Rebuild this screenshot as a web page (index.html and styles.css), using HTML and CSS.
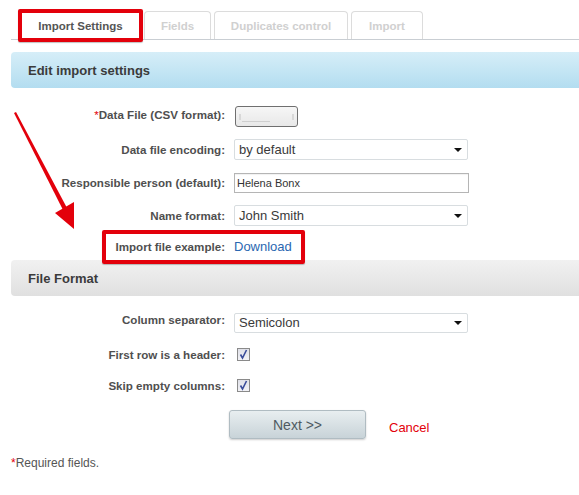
FILE: index.html
```html
<!DOCTYPE html>
<html>
<head>
<meta charset="utf-8">
<link rel="stylesheet" href="styles.css">
</head>
<body>
<div class="page">
  <div class="tabs">
    <div class="tab tab-active">Import Settings</div>
    <div class="tab tab-fields">Fields</div>
    <div class="tab tab-dup">Duplicates control</div>
    <div class="tab tab-import">Import</div>
  </div>

  <div class="section-head blue">Edit import settings</div>

  <div class="form form-main">
    <div class="row r1">
      <div class="label"><span class="req">*</span>Data File (CSV format):</div>
      <div class="control"><div class="filebtn"><span class="fb-l"></span><span class="fb-line"></span><span class="fb-r"></span></div></div>
    </div>
    <div class="row r2">
      <div class="label">Data file encoding:</div>
      <div class="control"><div class="select">by default<span class="caret"></span></div></div>
    </div>
    <div class="row r3">
      <div class="label">Responsible person (default):</div>
      <div class="control"><div class="textinput">Helena Bonx</div></div>
    </div>
    <div class="row r4">
      <div class="label">Name format:</div>
      <div class="control"><div class="select">John Smith<span class="caret"></span></div></div>
    </div>
    <div class="row r5">
      <div class="label">Import file example:</div>
      <div class="control"><span class="link">Download</span></div>
    </div>
    <div class="annot-box"></div>
    <svg class="arrow" width="90" height="130" viewBox="0 0 90 130">
      <polygon points="14,13 16,12 67,108 63,110" fill="#e3000b"/>
      <polygon points="55,113 74,102 74,129" fill="#e3000b"/>
    </svg>
  </div>

  <div class="section-head gray">File Format</div>

  <div class="form form-second">
    <div class="row s1">
      <div class="label">Column separator:</div>
      <div class="control"><div class="select sel-small">Semicolon<span class="caret"></span></div></div>
    </div>
    <div class="row s2">
      <div class="label">First row is a header:</div>
      <div class="control"><span class="checkbox"><svg width="11" height="11" viewBox="0 0 11 11"><path d="M2.5 5.5 L4.5 9 L8.5 1" fill="none" stroke="#3a4c9a" stroke-width="1.6"/></svg></span></div>
    </div>
    <div class="row s3">
      <div class="label">Skip empty columns:</div>
      <div class="control"><span class="checkbox"><svg width="11" height="11" viewBox="0 0 11 11"><path d="M2.5 5.5 L4.5 9 L8.5 1" fill="none" stroke="#3a4c9a" stroke-width="1.6"/></svg></span></div>
    </div>
  </div>

  <div class="buttons">
    <div class="btn-next">Next &gt;&gt;</div>
    <span class="cancel">Cancel</span>
  </div>

  <div class="required"><span class="req">*</span>Required fields.</div>
</div>
</body>
</html>
```

FILE: styles.css
```css
html, body {
  margin: 0;
  padding: 0;
  background: #fff;
}
body {
  font-family: "Liberation Sans", Arial, sans-serif;
  color: #555;
  width: 579px;
  height: 495px;
  overflow: hidden;
}
.page {
  position: relative;
}
.tabs {
  display: flex;
  align-items: flex-start;
  margin-left: 11px;
  padding: 9px 0 0 7px;
  height: 30px;
  border-bottom: 1px solid #c9ced3;
}
.tab {
  box-sizing: border-box;
  height: 28px;
  margin-top: 2px;
  border: 1px solid #dcdcdc;
  border-bottom: none;
  border-radius: 4px 4px 0 0;
  background: #fff;
  color: #d0d0d0;
  font-weight: bold;
  font-size: 11.5px;
  display: flex;
  align-items: center;
  justify-content: center;
  margin-left: 3px;
}
.tab-active {
  position: relative;
  z-index: 2;
  width: 125px;
  height: 33px;
  margin-top: 0;
  margin-left: 0;
  border: 4px solid #e3000b;
  border-radius: 2px;
  color: #555;
  padding-top: 1px;
  box-shadow: 0 1px 1px rgba(0,0,0,0.25);
}
.tab-fields { width: 67px; margin-left: 1px; }
.tab-dup { width: 134px; }
.tab-import { width: 72px; }

.section-head {
  margin-left: 11px;
  height: 36px;
  border-radius: 4px 0 0 4px;
  padding-left: 17px;
  display: flex;
  align-items: center;
  font-weight: bold;
  font-size: 13px;
  color: #3b3b3b;
}
.blue {
  margin-top: 12px;
  background: linear-gradient(#d6eef8, #b3ddf0);
}
.gray {
  background: linear-gradient(#f1f1f1, #e0e0e0);
}

.form {
  position: relative;
}
.form-main {
  padding-top: 12px;
}
.form-second {
  padding-top: 10px;
}
.row {
  display: grid;
  grid-template-columns: 225px 1fr;
  column-gap: 9px;
  align-items: center;
  height: 33px;
}
.r5 { height: 28px; }
.s2, .s3 { height: 31px; }
.label {
  text-align: right;
  font-weight: bold;
  font-size: 11.6px;
  color: #4f4f4f;
}
.r1 .label { margin-top: -5px; }
.s1 .label { margin-top: -6px; }
.req { color: #e3000b; font-weight: normal; }
.control {
  display: flex;
  align-items: center;
}
.filebtn {
  position: relative;
  box-sizing: border-box;
  width: 63px;
  height: 21px;
  margin-left: 1px;
  border: 1px solid #6f6f6f;
  border-radius: 3px;
  background: linear-gradient(#f6f6f6, #e8e8e8);
}
.fb-l, .fb-r {
  position: absolute;
  top: 7px;
  width: 2px;
  height: 6px;
  background: #d8d8d8;
}
.fb-l { left: 3px; }
.fb-r { right: 3px; }
.fb-line {
  position: absolute;
  left: 6px;
  top: 14px;
  width: 28px;
  height: 1px;
  background: #cfcfcf;
}
.select {
  position: relative;
  box-sizing: border-box;
  width: 234px;
  height: 21px;
  border: 1px solid #d8dde0;
  border-radius: 2px;
  background: #fff;
  font-size: 13px;
  color: #3a3a3a;
  padding-left: 4px;
  display: flex;
  align-items: center;
}
.sel-small { height: 20px; font-size: 13px; margin-top: 0; }
.caret {
  position: absolute;
  right: 5px;
  top: 50%;
  margin-top: -2px;
  width: 0;
  height: 0;
  border-left: 4px solid transparent;
  border-right: 4px solid transparent;
  border-top: 4px solid #111;
}
.textinput {
  box-sizing: border-box;
  width: 235px;
  height: 20px;
  border: 1px solid #b5b5b5;
  font-size: 11px;
  color: #333;
  padding-left: 2px;
  display: flex;
  align-items: center;
  box-shadow: inset 0 1px 1px rgba(0,0,0,0.06);
}
.link {
  color: #2a67b1;
  font-size: 13px;
}
.annot-box {
  position: absolute;
  left: 102px;
  top: 142px;
  width: 203px;
  height: 34px;
  box-sizing: border-box;
  border: 4px solid #e3000b;
  border-radius: 2px;
  box-shadow: 0 1px 1px rgba(0,0,0,0.25);
  z-index: 3;
}
.arrow {
  position: absolute;
  left: 0;
  top: 12px;
}
.checkbox {
  box-sizing: border-box;
  width: 13px;
  height: 13px;
  margin-left: 3px;
  border: 1px solid #8a8a8a;
  background: linear-gradient(#dfe0e8, #f2f2f6);
  display: flex;
  align-items: center;
  justify-content: center;
}
.buttons {
  display: flex;
  align-items: center;
  margin-top: 9px;
  padding-left: 229px;
}
.btn-next {
  box-sizing: border-box;
  width: 137px;
  height: 29px;
  border: 1px solid #b0bcc2;
  border-radius: 3px;
  background: linear-gradient(#e8eef0, #c8d3d8);
  box-shadow: 0 1px 2px rgba(0,0,0,0.2);
  font-size: 14px;
  color: #4e5a61;
  display: flex;
  align-items: center;
  justify-content: center;
}
.cancel {
  margin-left: 23px;
  margin-top: 6px;
  font-size: 13px;
  color: #e3000b;
}
.required {
  margin-top: 17px;
  padding-left: 11px;
  font-size: 12px;
  color: #555;
}
```
